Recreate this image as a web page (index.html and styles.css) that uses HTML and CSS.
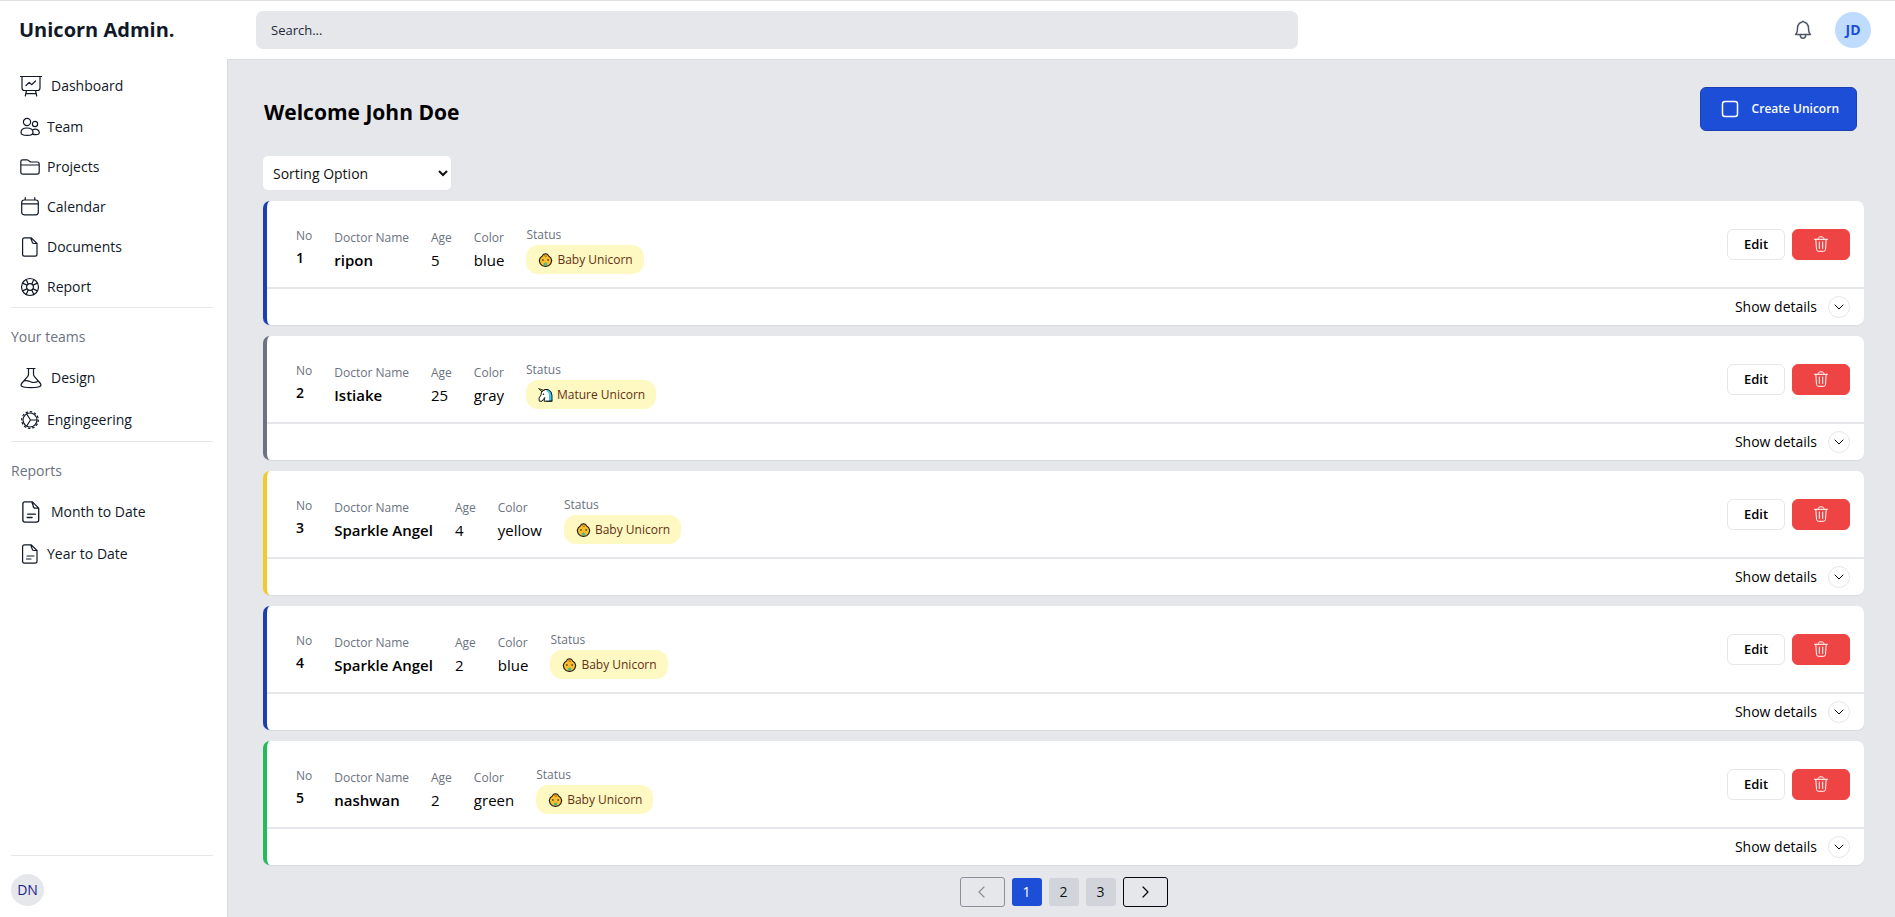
FILE: index.html
```html
<!DOCTYPE html>
<html lang="en">
<head>
<meta charset="utf-8">
<title>Unicorn Admin</title>
<link rel="stylesheet" href="styles.css">
</head>
<body>
<svg class="sprite" aria-hidden="true">
  <symbol id="i-board" viewBox="0 0 22 22"><path d="M.5 1.500h21M2 1.500v11.500q0 2.500 2.500 2.500h13q2.500 0 2.500-2.500V1.500M6.500 15.500 5.300 21M15.500 15.500l1.200 5.500M5.800 18.700h10.400M6 10.500l3.200-3.200 2.400 2.400L15.500 6"/></symbol>
  <symbol id="i-team" viewBox="0 0 20 20"><circle cx="7" cy="5" r="3.600"/><path d="M1 15.500C1 12.300 3.500 11 7 11s6 1.300 6 4.500C13 17.700 10.500 18.400 7 18.400S1 17.700 1 15.500z"/><circle cx="15" cy="7" r="2.600"/><path d="M13 12.600c3.200-1.200 6.300.2 6.300 2.900 0 1.500-1.400 2.100-3.600 2.100-1 0-1.900-.1-2.900-.5"/></symbol>
  <symbol id="i-folder" viewBox="0 0 20 20"><path d="M.8 15V4.500Q.8 2.800 2.500 2.800H7q.8 0 1.400.6L9.700 4.500q.6.5 1.400.5h6.200q1.900 0 1.900 1.900V15q0 2.200-2.200 2.200H3Q.8 17.200.8 15zM.8 8h18.400"/></symbol>
  <symbol id="i-calendar" viewBox="0 0 20 20"><path d="M4.200 3h11.600q2.500 0 2.500 2.500v9.800q0 2.500-2.500 2.500H4.200q-2.500 0-2.500-2.500V5.500Q1.700 3 4.200 3zM5.200.7V3M14.800.7V3M1.700 6.800h16.600"/></symbol>
  <symbol id="i-doc" viewBox="0 0 20 20"><path d="M4.500.8h6.800L17 6.500v10.800q0 1.900-1.900 1.900H4.500q-1.900 0-1.900-1.900V2.700Q2.600.8 4.500.8zM11 .8c-.2 1.800.8 2 1 3.700.1 1.500.5 2 2 2h3"/></symbol>
  <symbol id="i-ring" viewBox="0 0 20 20"><circle cx="10" cy="10" r="8.500"/><circle cx="10" cy="10" r="3.400"/><path d="M6.200 2.500l2 4.400M2.600 6.100l4.300 2M13.800 2.500l-2 4.400M17.400 6.100l-4.300 2M6.200 17.500l2-4.400M2.600 13.900l4.300-2M13.800 17.500l-2-4.400M17.400 13.900l-4.300-2"/></symbol>
  <symbol id="i-flask" viewBox="0 0 22 22"><path d="M7 1.500h8M8.500 1.500V7Q8.500 8.500 7.500 9.700L2 16q-1.700 2-.3 3.200Q3.200 20.700 11 20.700t9.300-1.500q1.400-1.200-.3-3.200l-5.500-6.300Q13.500 8.500 13.500 7V1.500M4 14c3-1.400 5 .2 7 1 2.500 1 4.500.6 7.500-.7"/></symbol>
  <symbol id="i-gear" viewBox="0 0 20 20"><circle cx="10" cy="10" r="7"/><circle cx="10" cy="10" r="8.300" stroke-dasharray="1.600 2.745"/><path d="M10.500 10H17M10.500 10 6.700 4M10.500 10l-3.800 6"/></symbol>
  <symbol id="i-report" viewBox="0 0 20 20"><path d="M4.500.8h6.800L17 6.500v10.800q0 1.900-1.900 1.900H4.500q-1.900 0-1.900-1.900V2.700Q2.600.8 4.500.8zM11 .8c-.2 1.800.8 2 1 3.700.1 1.500.5 2 2 2h3M7 12h7M6.500 15H11"/></symbol>
  <symbol id="i-trash" viewBox="0 0 16 16"><path d="M1.500 3.300h13M5 3.300C5 1.500 6 .8 8 .8s3 .7 3 2.500M2.800 3.300l.7 10q.2 2 2 2h5q1.800 0 2-2l.7-10M6.300 6v6.500M9.700 6v6.500"/></symbol>
  <symbol id="i-down" viewBox="0 0 12 12"><path d="M2 4l4 4 4-4"/></symbol>
  <symbol id="i-baby" viewBox="0 0 14 14"><path d="M5 1.200 7 .8l2 .4 1 1.600 2.300 2 .9 2.700-.9 3.200L10 12.800 7 13.400l-3-.6-2.300-2.100L.8 7.500l.9-2.700L4 2.800z" fill="#fbbf2d" stroke="#1a1a1a" stroke-width="1.100"/><path d="M3.800 6.300H5v1.400H3.800zM9 6.300h1.200v1.400H9z" fill="#1a1a1a" stroke="none"/><path d="M6 2.800q1.500 1.500 2.500.2" stroke="#b45309"/><ellipse cx="7" cy="11" rx="1.900" ry="1.500" fill="#4db892" stroke="none"/></symbol>
  <symbol id="i-unicorn" viewBox="0 0 15 14"><path d="M7 1.500h3q4 1.500 4 6v5.700H9z" fill="#38c6e8" stroke="#1a1a1a"/><path d="M3.500 3.500 7 1.800q4 2 4 5.500v5.400H6l1-3.700-3 3.700H1.300L1 10l2-3z" fill="#fff" stroke="none"/><path d="M7 1.800 3.500 3.500 3 7l-2 3 .3 3.200H4L6.800 9.500 6 13.200h8" stroke="#1a1a1a"/><path d="M.8.800 4 4l1.500-1.500z" fill="#a3a635" stroke="#1a1a1a" stroke-width=".8"/><circle cx="5.400" cy="6.200" r=".8" fill="#1a1a1a" stroke="none"/></symbol>
</svg>
<div class="app">
  <aside class="sidebar">
    <h1 class="brand">Unicorn Admin.</h1>
    <nav class="nav">
      <ul class="menu">
        <li><a class="item item-lg" href="#"><svg class="icon"><use href="#i-board"/></svg>Dashboard</a></li>
        <li><a class="item" href="#"><svg class="icon"><use href="#i-team"/></svg>Team</a></li>
        <li><a class="item" href="#"><svg class="icon"><use href="#i-folder"/></svg>Projects</a></li>
        <li><a class="item" href="#"><svg class="icon"><use href="#i-calendar"/></svg>Calendar</a></li>
        <li><a class="item" href="#"><svg class="icon"><use href="#i-doc"/></svg>Documents</a></li>
        <li><a class="item" href="#"><svg class="icon"><use href="#i-ring"/></svg>Report</a></li>
      </ul>
      <section class="group">
        <h2 class="group-title">Your teams</h2>
        <ul class="menu">
          <li><a class="item item-lg" href="#"><svg class="icon"><use href="#i-flask"/></svg>Design</a></li>
          <li><a class="item" href="#"><svg class="icon"><use href="#i-gear"/></svg>Engingeering</a></li>
        </ul>
      </section>
      <section class="group">
        <h2 class="group-title">Reports</h2>
        <ul class="menu">
          <li><a class="item item-lg" href="#"><svg class="icon"><use href="#i-report"/></svg>Month to Date</a></li>
          <li><a class="item" href="#"><svg class="icon"><use href="#i-report"/></svg>Year to Date</a></li>
        </ul>
      </section>
    </nav>
    <div class="account"><span class="account-badge">DN</span></div>
  </aside>
  <div class="content">
    <header class="topbar">
      <input class="search" type="search" placeholder="Search..." aria-label="Search">
      <div class="topbar-right">
        <button class="bell" type="button" aria-label="Notifications"><svg viewBox="0 0 18 20"><path d="M1.500 14.500C3.500 13 3.500 11.500 3.500 8c0-3.300 2.300-5.500 4.200-5.700L9 1.200l1.300 1.100c1.900.2 4.200 2.400 4.200 5.700 0 3.500 0 5 2 6.500zM6.200 15c.2 2.200 1.300 3.200 2.800 3.200s2.600-1 2.800-3.200"/></svg></button>
        <span class="avatar">JD</span>
      </div>
    </header>
    <main class="main">
      <div class="heading">
        <h2 class="welcome">Welcome John Doe</h2>
        <button class="create" type="button"><svg viewBox="0 0 18 18"><rect x="1.500" y="1.500" width="15" height="15" rx="2.500"/></svg>Create Unicorn</button>
      </div>
      <select class="sort" aria-label="Sorting option"><option>Sorting Option</option></select>
      <div class="cards">
        <article class="card card-blue">
          <div class="card-top">
            <dl class="fields">
              <div class="field field-no"><dt>No</dt><dd>1</dd></div>
              <div class="field"><dt>Doctor Name</dt><dd class="strong">ripon</dd></div>
              <div class="field"><dt>Age</dt><dd>5</dd></div>
              <div class="field"><dt>Color</dt><dd>blue</dd></div>
              <div class="field"><dt>Status</dt><dd class="badge"><svg><use href="#i-baby"/></svg>Baby Unicorn</dd></div>
            </dl>
            <div class="actions"><button class="edit" type="button">Edit</button><button class="delete" type="button" aria-label="Delete"><svg><use href="#i-trash"/></svg></button></div>
          </div>
          <div class="card-bottom"><button class="details" type="button">Show details<span class="chevron"><svg><use href="#i-down"/></svg></span></button></div>
        </article>
        <article class="card card-gray">
          <div class="card-top">
            <dl class="fields">
              <div class="field field-no"><dt>No</dt><dd>2</dd></div>
              <div class="field"><dt>Doctor Name</dt><dd class="strong">Istiake</dd></div>
              <div class="field"><dt>Age</dt><dd>25</dd></div>
              <div class="field"><dt>Color</dt><dd>gray</dd></div>
              <div class="field"><dt>Status</dt><dd class="badge"><svg><use href="#i-unicorn"/></svg>Mature Unicorn</dd></div>
            </dl>
            <div class="actions"><button class="edit" type="button">Edit</button><button class="delete" type="button" aria-label="Delete"><svg><use href="#i-trash"/></svg></button></div>
          </div>
          <div class="card-bottom"><button class="details" type="button">Show details<span class="chevron"><svg><use href="#i-down"/></svg></span></button></div>
        </article>
        <article class="card card-yellow">
          <div class="card-top">
            <dl class="fields">
              <div class="field field-no"><dt>No</dt><dd>3</dd></div>
              <div class="field"><dt>Doctor Name</dt><dd class="strong">Sparkle Angel</dd></div>
              <div class="field"><dt>Age</dt><dd>4</dd></div>
              <div class="field"><dt>Color</dt><dd>yellow</dd></div>
              <div class="field"><dt>Status</dt><dd class="badge"><svg><use href="#i-baby"/></svg>Baby Unicorn</dd></div>
            </dl>
            <div class="actions"><button class="edit" type="button">Edit</button><button class="delete" type="button" aria-label="Delete"><svg><use href="#i-trash"/></svg></button></div>
          </div>
          <div class="card-bottom"><button class="details" type="button">Show details<span class="chevron"><svg><use href="#i-down"/></svg></span></button></div>
        </article>
        <article class="card card-blue">
          <div class="card-top">
            <dl class="fields">
              <div class="field field-no"><dt>No</dt><dd>4</dd></div>
              <div class="field"><dt>Doctor Name</dt><dd class="strong">Sparkle Angel</dd></div>
              <div class="field"><dt>Age</dt><dd>2</dd></div>
              <div class="field"><dt>Color</dt><dd>blue</dd></div>
              <div class="field"><dt>Status</dt><dd class="badge"><svg><use href="#i-baby"/></svg>Baby Unicorn</dd></div>
            </dl>
            <div class="actions"><button class="edit" type="button">Edit</button><button class="delete" type="button" aria-label="Delete"><svg><use href="#i-trash"/></svg></button></div>
          </div>
          <div class="card-bottom"><button class="details" type="button">Show details<span class="chevron"><svg><use href="#i-down"/></svg></span></button></div>
        </article>
        <article class="card card-green">
          <div class="card-top">
            <dl class="fields">
              <div class="field field-no"><dt>No</dt><dd>5</dd></div>
              <div class="field"><dt>Doctor Name</dt><dd class="strong">nashwan</dd></div>
              <div class="field"><dt>Age</dt><dd>2</dd></div>
              <div class="field"><dt>Color</dt><dd>green</dd></div>
              <div class="field"><dt>Status</dt><dd class="badge"><svg><use href="#i-baby"/></svg>Baby Unicorn</dd></div>
            </dl>
            <div class="actions"><button class="edit" type="button">Edit</button><button class="delete" type="button" aria-label="Delete"><svg><use href="#i-trash"/></svg></button></div>
          </div>
          <div class="card-bottom"><button class="details" type="button">Show details<span class="chevron"><svg><use href="#i-down"/></svg></span></button></div>
        </article>
      </div>
      <nav class="pager" aria-label="Pages">
        <button class="step" type="button" disabled aria-label="Previous page"><svg viewBox="0 0 12 12"><path d="M8 1 3 6l5 5"/></svg></button>
        <button class="page current" type="button" aria-current="page">1</button>
        <button class="page" type="button">2</button>
        <button class="page" type="button">3</button>
        <button class="step" type="button" aria-label="Next page"><svg viewBox="0 0 12 12"><path d="M4 1l5 5-5 5"/></svg></button>
      </nav>
    </main>
  </div>
</div>
</body>
</html>
```

FILE: styles.css
```css
* { box-sizing: border-box; }
body {
  margin: 0;
  font-family: "Open Sans", "Noto Sans", sans-serif;
  font-size: 14px;
  line-height: 20px;
  color: #000;
  background: #e5e7eb;
}
h1, h2, ul, dl, dd { margin: 0; padding: 0; }
ul { list-style: none; }
button { font: inherit; color: inherit; cursor: pointer; }
svg { display: block; fill: none; stroke: currentColor; stroke-linecap: round; stroke-linejoin: round; }
.sprite { display: none; }

.app { display: flex; min-height: 100vh; border-top: 1px solid #e0e0e0; }

/* Sidebar */
.sidebar { flex: none; display: flex; flex-direction: column; width: 227px; padding: 0 14px 11px 11px; background: #fff; }
.brand { padding: 12px 8px 18px; font-size: 20px; line-height: 34px; font-weight: 700; color: #111827; }
.item { display: flex; align-items: center; gap: 7px; height: 40px; padding-left: 9px; font-size: 14px; font-weight: 500; color: #111827; text-decoration: none; }
.item-lg { height: 42px; gap: 9px; }
.icon { width: 20px; height: 20px; stroke-width: 1.2; }
.item-lg .icon { width: 22px; height: 22px; }
.group { border-top: 1px solid #e5e7eb; }
.group-title { margin: 19px 0 10px; font-size: 14px; font-weight: 400; color: #6b7280; }
.group .item { height: 42px; }
.account { margin-top: auto; padding-top: 18px; border-top: 1px solid #e5e7eb; }
.account-badge { display: flex; align-items: center; justify-content: center; width: 33px; height: 32px; border-radius: 50%; background: #e5e7eb; color: #1e1b8b; }

/* Top bar */
.content { flex: 1; min-width: 0; display: flex; flex-direction: column; }
.topbar { display: flex; align-items: center; justify-content: space-between; padding: 10px 24px 10px 29px; background: #fff; }
.search { width: 55vw; height: 38px; padding: 0 15px; border: 0; border-radius: 7px; background: #e5e7eb; font: inherit; font-size: 13px; }
.search::placeholder { color: #1f2937; opacity: 1; }
.topbar-right { display: flex; align-items: center; gap: 23px; }
.bell { padding: 0; border: 0; background: none; color: #4b5563; }
.bell svg { width: 18px; height: 20px; stroke-width: 1.5; }
.avatar { display: flex; align-items: center; justify-content: center; width: 36px; height: 36px; border-radius: 50%; background: #bfdbfe; color: #1d4ed8; font-size: 14px; font-weight: 700; }

/* Main area */
.main { flex: 1; padding: 27px 31px 10px 35px; border-top: 1px solid #d9dbe0; border-left: 1px solid #d9dbe0; }
.heading { display: flex; align-items: flex-start; justify-content: space-between; padding-right: 7px; margin-bottom: 25px; }
.welcome { padding: 9px 0 0 1px; font-size: 21px; line-height: 32px; font-weight: 700; }
.create { display: flex; align-items: center; gap: 13px; height: 44px; padding: 0 17px 0 20px; border: 1px solid #1e40af; border-radius: 6px; background: #1d4ed8; color: #fff; font-size: 12px; font-weight: 600; }
.create svg { width: 18px; height: 18px; stroke-width: 1.5; }
.sort { display: block; width: 188px; height: 34px; padding: 0 6px; border: 0; border-radius: 5px; background: #fff; color: #111; font: inherit; }

.cards { display: grid; gap: 11px; margin-top: 11px; }
.card { border-left: 4px solid; border-radius: 7px; background: #fff; box-shadow: 0 1px 1px rgba(0, 0, 0, 0.06); }
.card-blue { border-color: #1e40af; }
.card-gray { border-color: #6b7280; }
.card-yellow { border-color: #f1ca2c; }
.card-green { border-color: #26ba5c; }
.card-top { display: flex; align-items: center; justify-content: space-between; padding: 13px 14px 13px 29px; }
.fields { display: flex; align-items: center; gap: 22px; margin-top: 11px; color: #000; }
.field dt { font-size: 12px; line-height: 20px; color: #6b7280; }
.field dd { font-size: 15px; line-height: 24px; }
.field .strong { font-weight: 600; }
.field-no { margin-bottom: 4px; }
.field-no dd { font-weight: 600; font-size: 14px; }
.field .badge { display: flex; align-items: center; gap: 4px; padding: 0 11px 0 12px; border-radius: 12px; background: #fef9c3; color: #652f10; font-size: 12px; line-height: 29px; font-weight: 500; }
.badge svg { width: 15px; height: 14px; }
.actions { display: flex; gap: 7px; }
.edit, .delete { display: flex; align-items: center; justify-content: center; width: 58px; height: 31px; padding: 0; border-radius: 6px; }
.edit { border: 1px solid #e5e7eb; background: #fff; font-size: 13px; font-weight: 600; }
.delete { border: 1px solid #ef4444; background: #ef4444; color: #fff; }
.delete svg { width: 16px; height: 16px; }
.card-bottom { display: flex; justify-content: flex-end; padding: 7px 14px; border-top: 2px solid #e5e7eb; }
.details { display: flex; align-items: center; gap: 11px; padding: 0; border: 0; background: none; font-weight: 500; }
.chevron { display: flex; align-items: center; justify-content: center; width: 22px; height: 22px; border: 1px solid #e5e7eb; border-radius: 50%; }
.chevron svg { width: 12px; height: 12px; }

.pager { display: flex; align-items: center; justify-content: center; gap: 7px; margin-top: 12px; }
.step { display: flex; align-items: center; justify-content: center; width: 45px; height: 30px; padding: 0; border: 1px solid #030712; border-radius: 3px; background: none; color: #030712; }
.step:disabled { border-color: #8b8f99; color: #8b8f99; }
.step svg { width: 12px; height: 12px; stroke-width: 1.2; }
.page { width: 30px; height: 28px; padding: 0; border: 0; border-radius: 3px; background: #d1d5db; color: #111; }
.page.current { background: #1d4ed8; color: #fff; }
```
